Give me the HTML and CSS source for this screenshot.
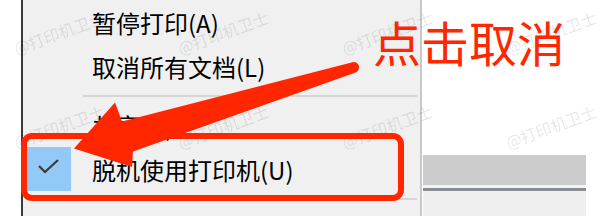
FILE: index.html
```html
<!DOCTYPE html>
<html lang="zh-CN">
<head>
<meta charset="utf-8">
<title>脱机使用打印机</title>
<link rel="stylesheet" href="styles.css">
</head>
<body>
<div class="stage">
  <div class="gutter"></div>
  <div class="menu">
    <div class="item"><span class="icon"></span><span class="label">暂停打印(A)</span></div>
    <div class="item"><span class="icon"></span><span class="label">取消所有文档(L)</span></div>
    <div class="sep"></div>
    <div class="item"><span class="icon"></span><span class="label">共享(H)...</span></div>
    <div class="item"><span class="icon checked"><svg width="44" height="44" viewBox="0 0 44 44"><path d="M12 19 L18 25 L31 13" fill="none" stroke="#3a3a3a" stroke-width="2.2"/></svg></span><span class="label">脱机使用打印机(U)</span></div>
    <div class="sep"></div>
    <div class="item"><span class="icon"></span><span class="label">属性(R)</span></div>
  </div>
  <div class="pane">
    <div class="pane-top"></div>
    <div class="pane-bar"></div>
    <div class="pane-gap"></div>
    <div class="pane-line"></div>
    <div class="pane-body"></div>
  </div>

  <span class="wm wm-r1 wm-c1">@打印机卫士</span>
  <span class="wm wm-r1 wm-c2">@打印机卫士</span>
  <span class="wm wm-r1 wm-c3">@打印机卫士</span>
  <span class="wm wm-r1 wm-c4">@打印机卫士</span>
  <span class="wm wm-r2 wm-c1">@打印机卫士</span>
  <span class="wm wm-r2 wm-c2">@打印机卫士</span>
  <span class="wm wm-r2 wm-c3">@打印机卫士</span>
  <span class="wm wm-r2 wm-c4">@打印机卫士</span>

  <div class="callout-box"></div>
  <svg class="arrow" width="600" height="216" viewBox="0 0 600 216">
    <path d="M74 148.5 L115 102.5 L122 121.5 L352.5 62.2 A5.3 5.3 0 0 1 355 72.7 L133 151.5 L132 167 Z" fill="#ff2600"/>
  </svg>
  <div class="callout-text">点击取消</div>
</div>
</body>
</html>
```
FILE: styles.css
```css
html, body {
  margin: 0;
  padding: 0;
  background: #ffffff;
}

.stage {
  position: relative;
  width: 600px;
  height: 216px;
  overflow: hidden;
  display: flex;
  font-family: "Noto Sans CJK SC", "Noto Sans", sans-serif;
  background: #ffffff;
}

.gutter {
  width: 21px;
  flex: none;
}

.menu {
  width: 397px;
  flex: none;
  background: #f0f0f0;
  border-left: 2px solid #3a3a3a;
  border-right: 2px solid #c8c8c8;
  overflow: hidden;
  display: flex;
  flex-direction: column;
}

.item {
  height: 44px;
  flex: none;
  display: flex;
  align-items: center;
  padding-left: 4px;
}

.icon {
  width: 44px;
  height: 44px;
  flex: none;
  display: block;
}

.icon svg {
  display: block;
}

.icon.checked {
  background: #92c9f7;
}

.label {
  margin-left: 21px;
  font-size: 24px;
  font-weight: 400;
  color: #000000;
  white-space: nowrap;
}

.sep {
  flex: none;
  height: 2px;
  margin: 7px 3px 6px 60px;
  background: #d6d6d6;
}

.pane {
  width: 163px;
  margin-left: 1px;
  flex: none;
  display: flex;
  flex-direction: column;
}

.pane-top {
  height: 155px;
  background: #ffffff;
}

.pane-bar {
  height: 30px;
  background: #cccccc;
}

.pane-gap {
  height: 3px;
  background: #f4f4f4;
}

.pane-line {
  height: 3px;
  background: #8a8d93;
}

.pane-body {
  flex: 1;
  background: #efefef;
}

/* watermark */
.wm {
  position: absolute;
  font-size: 16px;
  line-height: 16px;
  color: rgba(0, 0, 0, 0.11);
  white-space: nowrap;
  transform-origin: left bottom;
  transform: rotate(-20deg);
  pointer-events: none;
}
.wm-r1 { top: 40px; }
.wm-r2 { top: 134px; }
.wm-c1 { left: 17px; }
.wm-c2 { left: 181px; }
.wm-c3 { left: 345px; }
.wm-c4 { left: 509px; }

/* annotations */
.callout-box {
  position: absolute;
  left: 21px;
  top: 133px;
  width: 371px;
  height: 56px;
  border: 6px solid #ff2600;
  border-radius: 11px;
}

.arrow {
  position: absolute;
  left: 0;
  top: 0;
}

.callout-text {
  position: absolute;
  left: 373px;
  top: 17px;
  font-size: 48px;
  line-height: 48px;
  color: #ff2600;
  white-space: nowrap;
}
```
